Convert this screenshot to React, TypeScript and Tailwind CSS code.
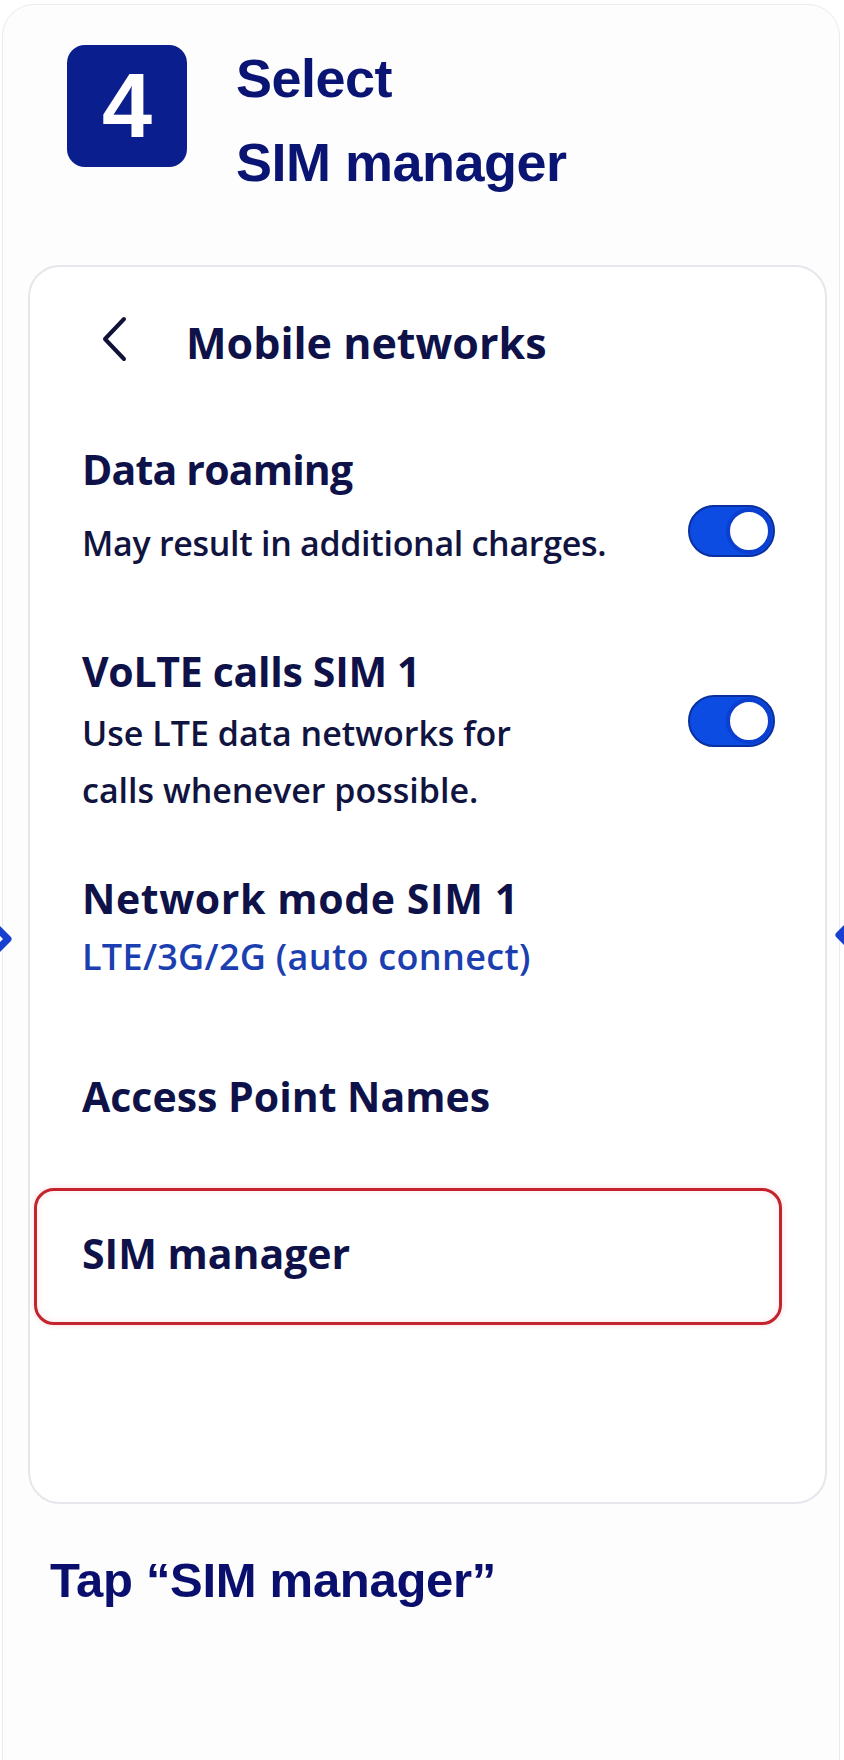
import React from 'react';

const head = { fontFamily: '"Liberation Sans", Arial, sans-serif' };
const phone = { fontFamily: '"Open Sans", "Liberation Sans", Arial, sans-serif' };

const Toggle = ({ className = '' }: { className?: string }) => (
  <div className={`w-[87px] h-[52px] shrink-0 rounded-full bg-[#0c4ce3] border-2 border-[#0a2f9f] flex items-center justify-end pr-[1px] ${className}`}>
    <div className="w-[46px] h-[46px] rounded-full bg-white border-[4px] border-[#0b3fcf]" />
  </div>
);

const Title = ({ children, className = '' }: { children: React.ReactNode; className?: string }) => (
  <div className={`text-[41px] leading-[48px] font-bold text-[#0e1249] ${className}`}>{children}</div>
);

const Sub = ({ children, className = '', blue = false }: { children: React.ReactNode; className?: string; blue?: boolean }) => (
  <div className={`leading-[57px] font-semibold ${blue ? 'text-[36px] tracking-[0.3px] text-[#1b3fb0]' : 'text-[34px] text-[#10143f]'} ${className}`}>
    {children}
  </div>
);

export default function App() {
  return (
    <div className="relative h-[1760px] overflow-hidden bg-white" style={head}>
      {/* carousel arrow tips peeking in at the edges */}
      <svg className="absolute left-0 top-[922px]" width="12" height="34" viewBox="0 0 12 34">
        <path d="M-6 3 L8 17 L-6 31" fill="none" stroke="#1740d0" strokeWidth="7" strokeLinecap="round" strokeLinejoin="round" />
      </svg>
      <svg className="absolute left-[834px] top-[920px]" width="10" height="30" viewBox="0 0 10 30">
        <path d="M18 2 L5 15 L18 28" fill="none" stroke="#1740d0" strokeWidth="7" strokeLinecap="round" strokeLinejoin="round" />
      </svg>

      <div className="ml-[2px] mt-[4px] w-[838px] h-[1800px] rounded-[32px] border border-[#ebebef] bg-[#fdfdfe]">
        {/* step header */}
        <div className="flex items-start pt-[31px] pl-[64px]">
          <div className="mt-[9px] w-[120px] h-[122px] rounded-[18px] bg-[#0b1e8e] flex items-center justify-center text-white text-[90px] font-bold leading-none">
            4
          </div>
          <div className="ml-[49px] text-[54px] leading-[84px] font-bold tracking-[-0.5px] text-[#0a1472]">
            <div>Select</div>
            <div>SIM manager</div>
          </div>
        </div>

        {/* phone screen */}
        <div className="ml-[25px] mt-[61px] w-[799px] h-[1239px] rounded-[32px] border-2 border-[#e6e6ec] bg-white" style={phone}>
          <div className="mt-[52px] h-[48px] flex items-center">
            <svg className="ml-[70px] -mt-[8px]" width="28" height="46" viewBox="0 0 28 46">
              <path d="M24 3 L5 23 L24 43" fill="none" stroke="#101238" strokeWidth="4" strokeLinecap="round" strokeLinejoin="round" />
            </svg>
            <div className="ml-[58px] text-[43px] leading-[48px] font-bold text-[#0e1249]">Mobile networks</div>
          </div>

          <div className="mt-[78px] pl-[52px] pr-[50px] flex justify-between items-start">
            <div>
              <Title className="tracking-[-0.8px]">Data roaming</Title>
              <Sub className="mt-[22px] tracking-[-0.3px]">May result in additional charges.</Sub>
            </div>
            <Toggle className="mt-[60px]" />
          </div>

          <div className="mt-[75px] pl-[52px] pr-[50px] flex justify-between items-start">
            <div>
              <Title className="tracking-[-0.3px]">VoLTE calls SIM 1</Title>
              <Sub className="mt-[10px]">
                Use LTE data networks for
                <br />
                calls whenever possible.
              </Sub>
            </div>
            <Toggle className="mt-[48px]" />
          </div>

          <div className="mt-[55px] pl-[52px]">
            <Title className="tracking-[0.6px]">Network mode SIM 1</Title>
            <Sub className="mt-[6px]" blue>LTE/3G/2G (auto connect)</Sub>
          </div>

          <div className="mt-[87px] pl-[52px]">
            <Title>Access Point Names</Title>
          </div>

          <div className="mt-[68px] ml-[4px] w-[748px] h-[137px] rounded-[20px] border-[3px] border-[#c4232d] pt-[38px] pl-[45px] shadow-[0_0_6px_rgba(220,38,38,0.18),inset_0_0_6px_rgba(220,38,38,0.12)]">
            <Title>SIM manager</Title>
          </div>
        </div>

        <div className="ml-[47px] mt-[48px] text-[49px] leading-[56px] font-bold tracking-[-0.3px] text-[#0a0f6e]">
          Tap “SIM manager”
        </div>
      </div>
    </div>
  );
}
